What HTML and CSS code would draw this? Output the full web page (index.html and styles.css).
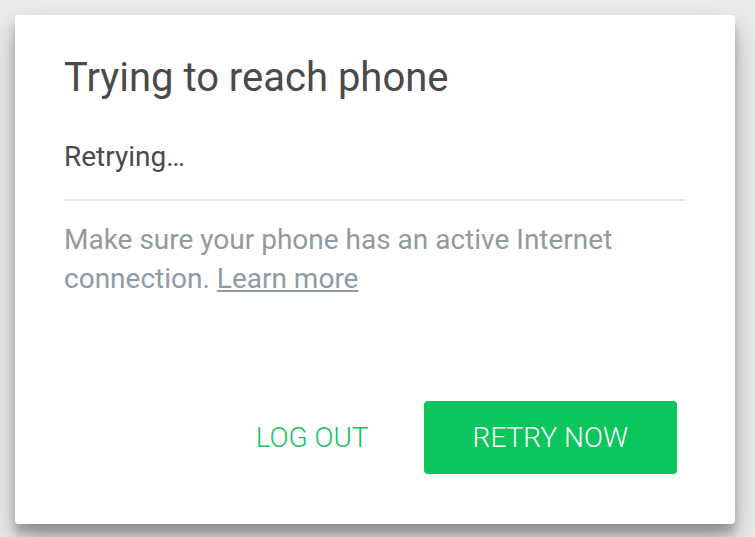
FILE: index.html
```html
<!DOCTYPE html>
<html>
<head>
<meta charset="utf-8">
<link rel="stylesheet" href="styles.css">
</head>
<body>
<div class="page">
  <div class="dialog">
    <h1 class="title">Trying to reach phone</h1>
    <div class="status">Retrying…</div>
    <div class="divider"></div>
    <p class="message">Make sure your phone has an active Internet connection. <a class="link" href="#">Learn more</a></p>
    <div class="actions">
      <button class="btn btn-text">LOG OUT</button>
      <button class="btn btn-primary">RETRY NOW</button>
    </div>
  </div>
</div>
</body>
</html>
```
FILE: styles.css
```css
html, body {
  margin: 0;
  padding: 0;
  background: #ebebeb;
  font-family: Roboto, "Liberation Sans", sans-serif;
}
.page {
  width: 755px;
  height: 537px;
  padding: 15px;
  box-sizing: border-box;
}
.dialog {
  width: 720px;
  height: 509px;
  box-sizing: border-box;
  background: #fff;
  border-radius: 4px;
  padding: 0 49px 50px 49px;
  display: flex;
  flex-direction: column;
  box-shadow: 0 14px 28px rgba(0,0,0,.25), 0 10px 10px rgba(0,0,0,.22);
}
.title {
  margin: 0;
  padding-top: 39px;
  font-size: 40px;
  line-height: 48px;
  font-weight: 400;
  color: #4a4a4a;
}
.status {
  margin-top: 39px;
  font-size: 28px;
  line-height: 32px;
  color: #4a4a4a;
}
.divider {
  height: 2px;
  background: #e5e5e5;
  margin-top: 26px;
}
.message {
  margin: 19px 0 0 0;
  font-size: 28px;
  line-height: 39px;
  color: #8f9ba2;
}
.link {
  color: #8f9ba2;
  text-decoration: underline;
}
.actions {
  margin-top: auto;
  display: flex;
  justify-content: flex-end;
  gap: 6px;
  margin-right: 9px;
}
.btn {
  height: 73px;
  padding: 0 49px;
  border: none;
  border-radius: 4px;
  font-family: Roboto, "Liberation Sans", sans-serif;
  font-size: 28px;
  font-weight: 300;
  background: transparent;
}
.btn-text {
  color: #1cbe5b;
}
.btn-primary {
  background: #0ac65c;
  color: #fff;
}
```
